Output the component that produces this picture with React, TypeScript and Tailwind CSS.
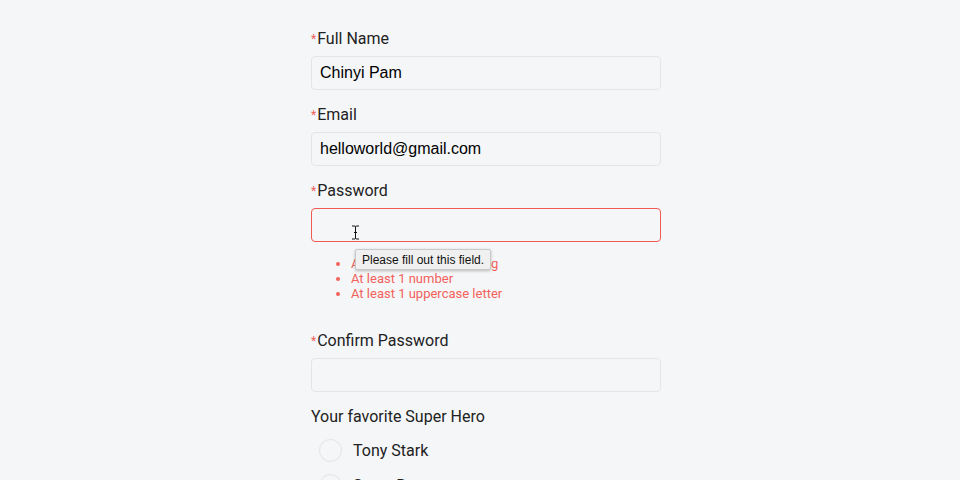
import React from 'react';

const Label: React.FC<{ text: string; required?: boolean }> = ({ text, required }) => (
  <label className="flex items-center h-6 pt-[2px] text-[16px] leading-6 text-[#222] font-['Roboto',sans-serif]">
    {required && <span className="text-[12px] text-[#f0605a] mr-px">*</span>}
    {text}
  </label>
);

const Field: React.FC<{ value?: string; error?: boolean }> = ({ value, error }) => (
  <input
    readOnly
    value={value ?? ''}
    className={`mt-1.5 w-[350px] h-[34px] rounded-[4px] bg-[#f5f6f8] pl-2 text-[16px] text-black font-['Liberation_Sans',Arial,sans-serif] outline-none border ${
      error ? 'border-[#f05a50]' : 'border-[#e4e5e8]'
    }`}
  />
);

const HEROES = ['Tony Stark', 'Steve Rogers'];

export default function App() {
  return (
    <div className="w-[960px] h-[480px] overflow-hidden bg-[#f5f6f8]">
      <form className="ml-[311px] pt-[26px] w-[350px] flex flex-col">
        <Label text="Full Name" required />
        <Field value="Chinyi Pam" />

        <div className="mt-3">
          <Label text="Email" required />
        </div>
        <Field value="helloworld@gmail.com" />

        <div className="mt-3">
          <Label text="Password" required />
        </div>
        <div className="relative">
          <Field error />
          {/* text cursor */}
          <svg className="absolute left-[40px] top-[23px]" width="9" height="15" viewBox="0 0 9 15">
            <path d="M1 1h2.5c.6 0 1 .4 1 1v11c0 .6.4 1 1 1H8M8 1H5.5c-.6 0-1 .4-1 1M1 14h2.5c.6 0 1-.4 1-1M3 7.5h3" stroke="#111" strokeWidth="1" fill="none" />
          </svg>
          <div className="absolute left-[44px] top-[47px] z-10 h-[21px] px-[6px] flex items-center rounded-[2px] bg-[#f0f0f0] border border-[#c9c9c9] shadow-[0_1px_3px_rgba(0,0,0,0.25)] text-[12px] text-[#111] font-['Liberation_Sans',Arial,sans-serif] whitespace-nowrap">
            Please fill out this field.
          </div>
        </div>
        <ul className="mt-[14px] pl-[40px] list-disc text-[13px] leading-[15px] text-[#f2625b] marker:text-[#f2625b] font-['Roboto',sans-serif]">
          <li>At least 8 characters long</li>
          <li>At least 1 number</li>
          <li>At least 1 uppercase letter</li>
        </ul>

        <div className="mt-[27px]">
          <Label text="Confirm Password" required />
        </div>
        <Field />

        <div className="mt-3">
          <Label text="Your favorite Super Hero" />
        </div>
        <div className="mt-[11px] flex flex-col gap-[12px]">
          {HEROES.map((h) => (
            <div key={h} className="flex items-center h-[23px]">
              <span className="ml-2 w-[23px] h-[23px] rounded-full border border-[#e2e3e6] bg-[#f5f6f8]" />
              <span className="ml-[11px] text-[16px] text-[#222] font-['Roboto',sans-serif]">{h}</span>
            </div>
          ))}
        </div>
      </form>
    </div>
  );
}
